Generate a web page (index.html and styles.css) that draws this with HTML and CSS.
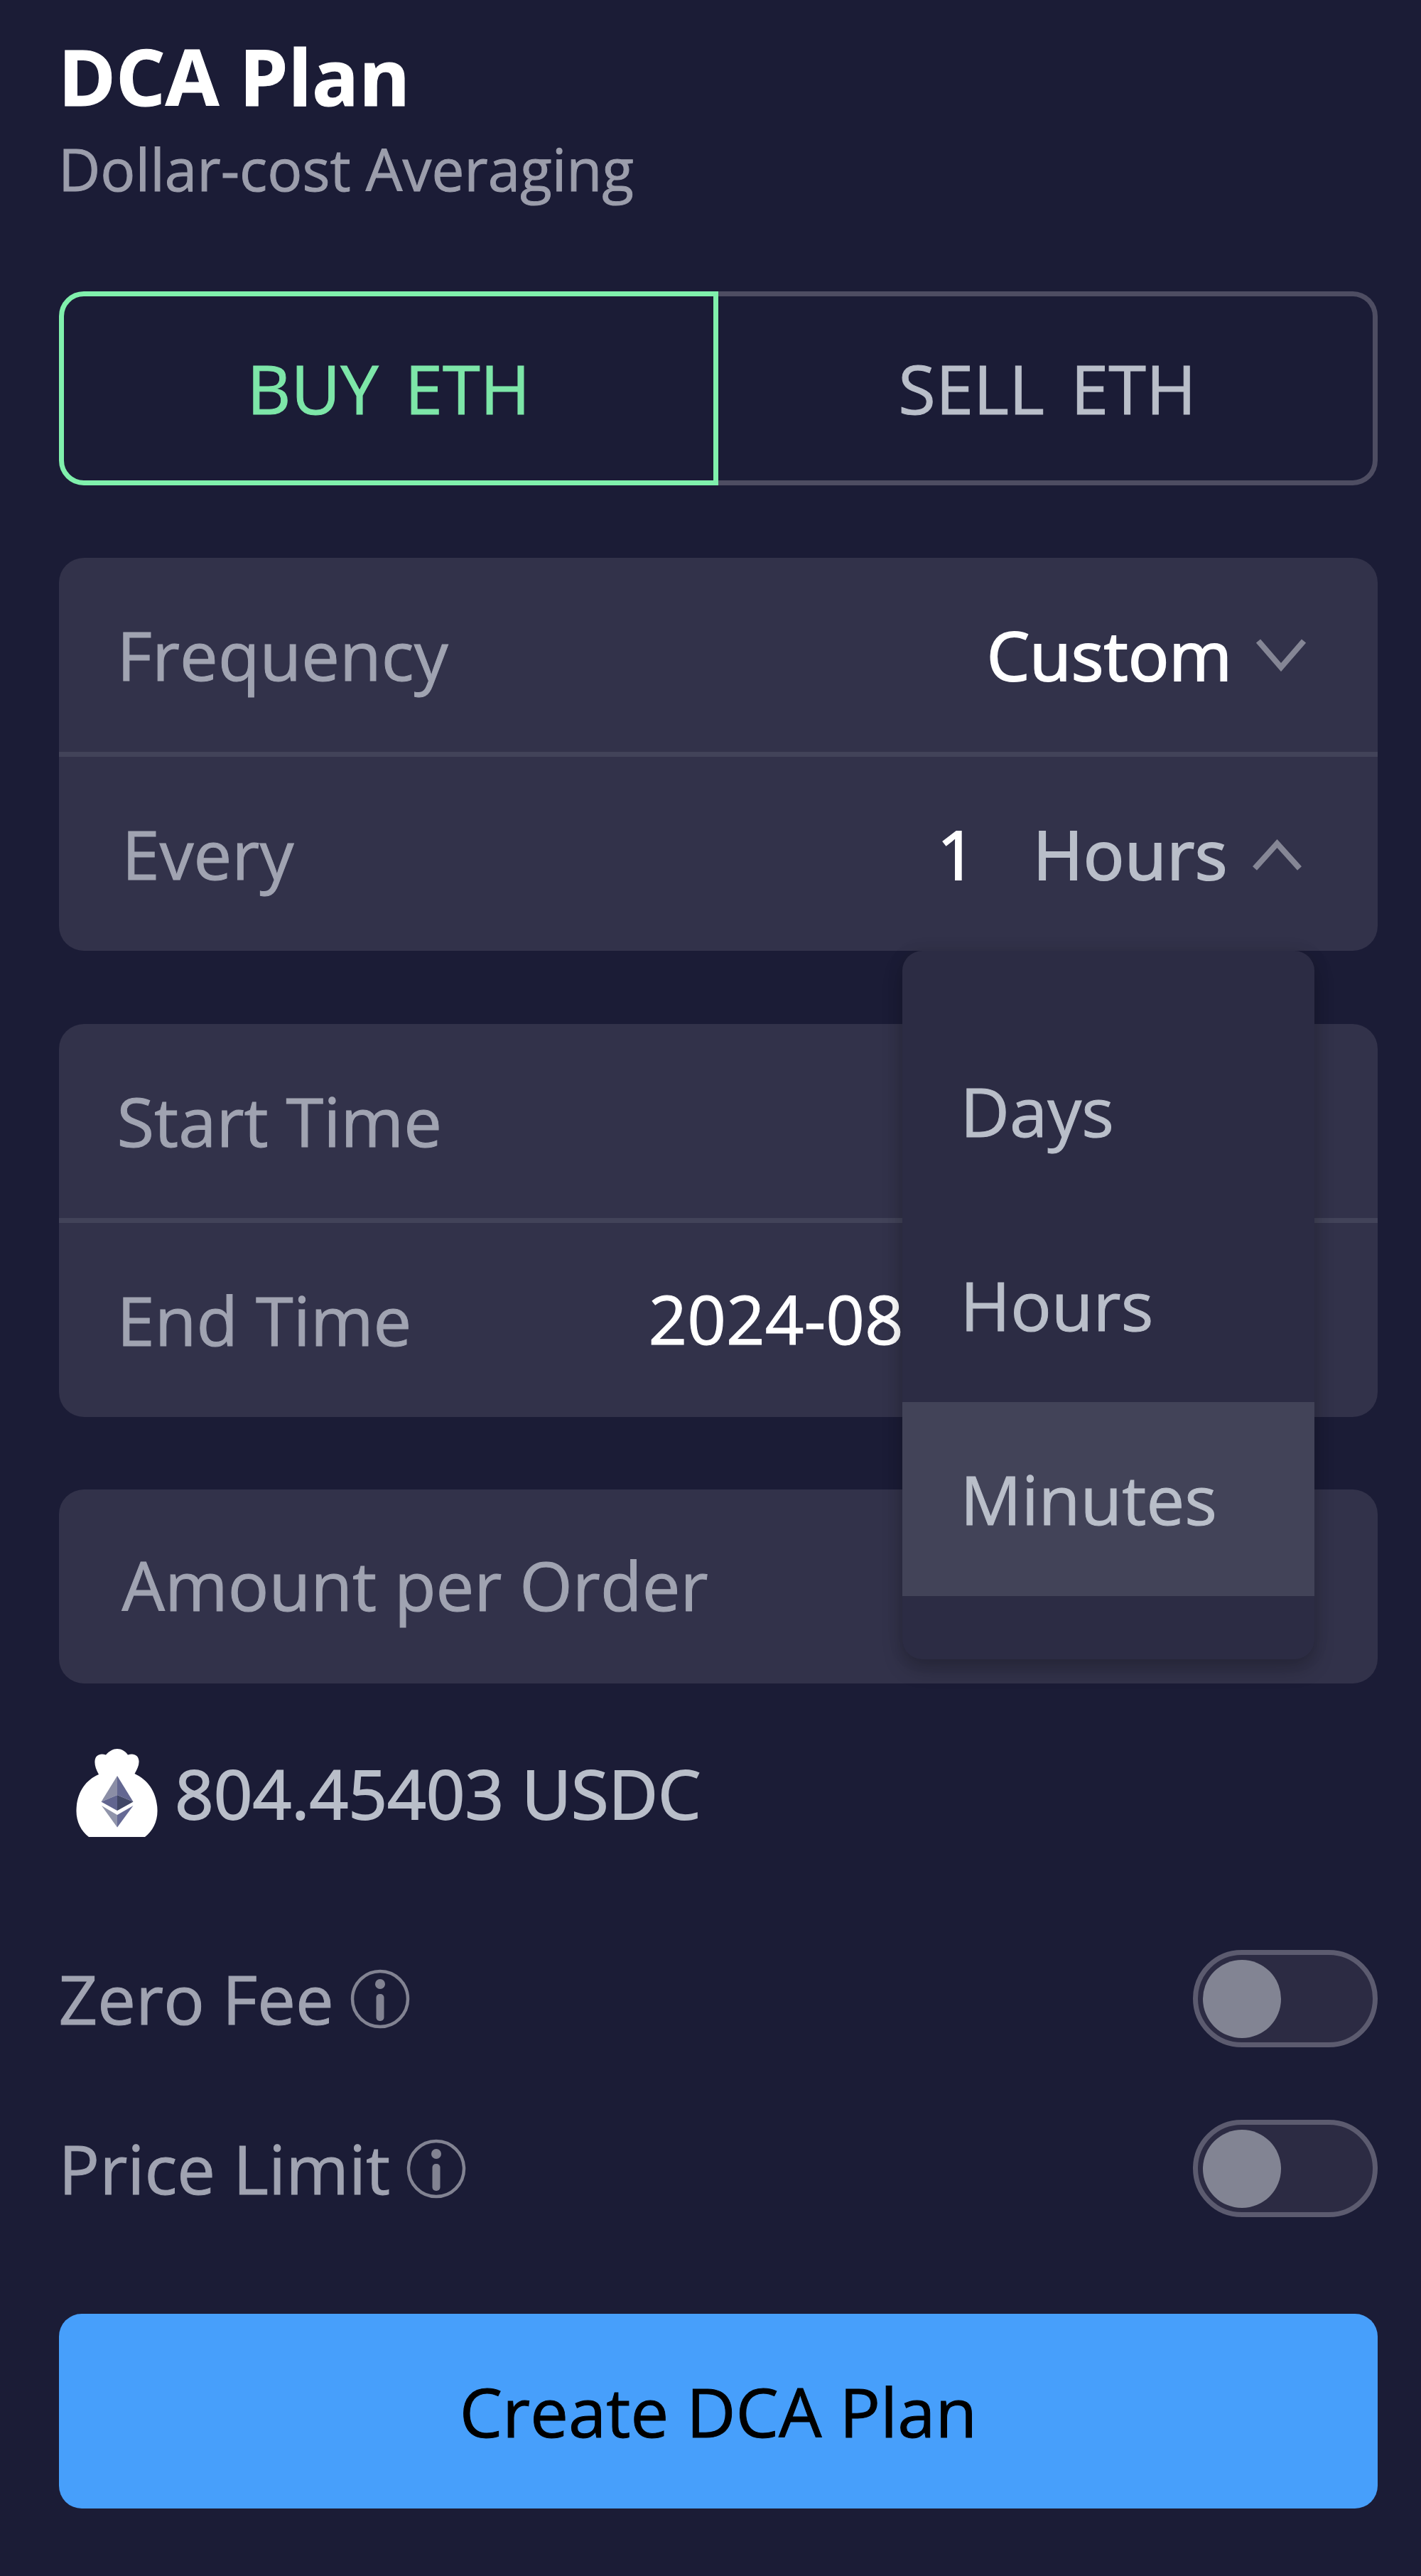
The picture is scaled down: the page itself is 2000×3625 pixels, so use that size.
FILE: index.html
```
<!DOCTYPE html>
<html lang="en">
<head>
<meta charset="utf-8">
<title>DCA Plan</title>
<link rel="stylesheet" href="styles.css">
</head>
<body>
<main class="plan">
  <header class="head">
    <h1 class="title">DCA Plan</h1>
    <p class="subtitle">Dollar-cost Averaging</p>
  </header>

  <div class="tabs">
    <button class="tab tab-buy">BUY ETH</button>
    <button class="tab tab-sell">SELL ETH</button>
  </div>

  <section class="group group-frequency">
    <div class="row">
      <span class="label">Frequency</span>
      <span class="select">
        <span class="value">Custom</span>
        <svg class="chevron" viewBox="0 0 70 46" fill="none"><path d="M3 3 35 40 67 3"/></svg>
      </span>
    </div>
    <div class="row row-every">
      <span class="label label-inset">Every</span>
      <span class="every">
        <span class="value">1</span>
        <span class="select select-unit">
          <span class="value unit">Hours</span>
          <svg class="chevron" viewBox="0 0 70 46" fill="none"><path d="M4 43 35.500 8 67 43"/></svg>
        </span>
      </span>
    </div>
    <ul class="menu">
      <li class="option">Days</li>
      <li class="option">Hours</li>
      <li class="option option-active">Minutes</li>
    </ul>
  </section>

  <section class="group">
    <div class="row"><span class="label">Start Time</span></div>
    <div class="row row-end"><span class="label">End Time</span><span class="value date">2024-08</span></div>
  </section>

  <section class="group">
    <div class="row row-amount"><span class="label label-inset">Amount per Order</span></div>
  </section>

  <div class="balance">
    <svg class="bag" viewBox="0 0 115 124">
      <path fill="#fff" d="M18 124C7 116 0 102 .5 86 1 62 13 44 32 36 28 29 26 23 26.500 17 27 9 34 5.500 42 8.500 47 3 52 0 58 0S69 3 73 8.500C81 5.500 88 9 88.500 17 89 23 86 29 82.500 35 102 44 114 62 114.500 86 115 102 108 116 97 124Z"/>
      <path fill="#8b8ea6" d="M58 38 35.500 74.500 58 65Z"/>
      <path fill="#636791" d="M58 38 80.500 74.500 58 65Z"/>
      <path fill="#61658f" d="M35.500 74.500 58 65V87Z"/>
      <path fill="#414766" d="M80.500 74.500 58 65V87Z"/>
      <path fill="#9094aa" d="M36 80 58 93V110.500Z"/>
      <path fill="#666a95" d="M80.500 80 58 93V110.500Z"/>
    </svg>
    <span class="amount">804.45403 USDC</span>
  </div>

  <div class="setting">
    <span class="setting-name">Zero Fee
      <svg class="info" viewBox="0 0 84 84"><circle class="ring" cx="42" cy="42" r="39"/><circle class="mark" cx="42" cy="21" r="7"/><rect class="mark" x="36.500" y="35" width="11" height="38" rx="5"/></svg>
    </span>
    <span class="toggle"><span class="knob"></span></span>
  </div>
  <div class="setting">
    <span class="setting-name">Price Limit
      <svg class="info" viewBox="0 0 84 84"><circle class="ring" cx="42" cy="42" r="39"/><circle class="mark" cx="42" cy="21" r="7"/><rect class="mark" x="36.500" y="35" width="11" height="38" rx="5"/></svg>
    </span>
    <span class="toggle"><span class="knob"></span></span>
  </div>

  <button class="submit">Create DCA Plan</button>
</main>
</body>
</html>
```
FILE: styles.css
```
* {
  box-sizing: border-box;
}

body {
  margin: 0;
  background: #1b1c36;
  font-family: "Open Sans", "Noto Sans", sans-serif;
  font-size: 95.8px;
  line-height: 131px;
  color: #a0a3b1;
  -webkit-text-stroke: 1px currentColor;
}

button {
  padding: 0;
  font: inherit;
  -webkit-text-stroke: inherit;
}

.plan {
  display: flex;
  flex-direction: column;
  width: 2000px;
  height: 3625px;
  padding: 32px 61px 0 83px;
}

.head {
  margin-left: -1px;
}

.title {
  margin: 0;
  font-size: 109.5px;
  font-weight: 700;
  line-height: 150px;
  color: #fff;
}

.subtitle {
  margin: 0;
  font-size: 81.8px;
  line-height: 112px;
  color: #9b9dab;
}

.tabs {
  display: flex;
  height: 273px;
  margin-top: 116px;
}

.tab {
  width: 928px;
  border: 7px solid;
  background: none;
  word-spacing: 12px;
  -webkit-text-stroke: 1px currentColor;
}

.tab-buy {
  border-color: #80f0ac;
  border-radius: 35px 0 0 35px;
  color: #7de6a8;
}

.tab-sell {
  padding-left: 5px;
  border-color: #4e4d62;
  border-left: 0;
  border-radius: 0 35px 35px 0;
  color: #b9bec9;
}

.group {
  position: relative;
  flex: none;
  margin-top: 102px;
  border-radius: 35px;
  background: #32324a;
}

.group-frequency {
  z-index: 1;
  margin-bottom: 1px;
}

.row {
  display: flex;
  align-items: center;
  justify-content: space-between;
  height: 273px;
  padding: 0 101px 0 81.5px;
}

.row + .row {
  height: 280px;
  border-top: 7px solid #424359;
}

.row-every {
  padding-right: 107px;
}

.row-end {
  justify-content: flex-start;
  gap: 333px;
}

.row-amount {
  padding-bottom: 5px;
}

.label-inset {
  margin-left: 7px;
}

.value {
  color: #fff;
  -webkit-text-stroke: 2px currentColor;
}

.date {
  padding-bottom: 5px;
  -webkit-text-stroke-width: 1px;
}

.unit {
  color: #b9bec9;
  letter-spacing: 0.5px;
}

.every {
  display: flex;
  gap: 80px;
}

.select {
  display: flex;
  align-items: center;
  gap: 34px;
}

.chevron {
  width: 70px;
  height: 46px;
  stroke: #858695;
  stroke-width: 8;
}

.menu {
  position: absolute;
  top: 553px;
  right: 89px;
  width: 580px;
  margin: 0;
  padding: 89px 0;
  border-radius: 28px;
  background: #2c2c44;
  box-shadow: 0 14px 28px rgba(0, 0, 0, 0.22), 0 0 24px rgba(0, 0, 0, 0.08);
  list-style: none;
  color: #b9bec9;
}

.option {
  display: flex;
  align-items: center;
  height: 273px;
  padding-left: 81.5px;
}

.option-active {
  background: #424358;
}

.balance {
  display: flex;
  align-items: center;
  gap: 24px;
  height: 124px;
  margin: 92px 0 57px 24px;
  color: #b9bec9;
}

.bag {
  width: 115px;
  height: 124px;
}

.amount {
  -webkit-text-stroke: 1.8px currentColor;
}

.setting {
  display: flex;
  align-items: center;
  justify-content: space-between;
  height: 137px;
  margin-top: 102px;
}

.setting-name {
  display: flex;
  align-items: center;
  gap: 23px;
  margin-left: -0.5px;
}

.info {
  width: 84px;
  height: 84px;
}

.ring {
  fill: none;
  stroke: #828392;
  stroke-width: 4.5;
}

.mark {
  fill: #828392;
}

.toggle {
  width: 260px;
  height: 137px;
  padding: 6.5px 7px;
  border: 7px solid #5c5b6f;
  border-radius: 69px;
  background: #2c2b43;
}

.knob {
  display: block;
  width: 110px;
  height: 110px;
  border-radius: 50%;
  background: #828493;
}

.submit {
  flex: none;
  height: 274px;
  margin-top: 136px;
  border: 0;
  border-radius: 32px;
  background: #479ffb;
  color: #000;
}
```
